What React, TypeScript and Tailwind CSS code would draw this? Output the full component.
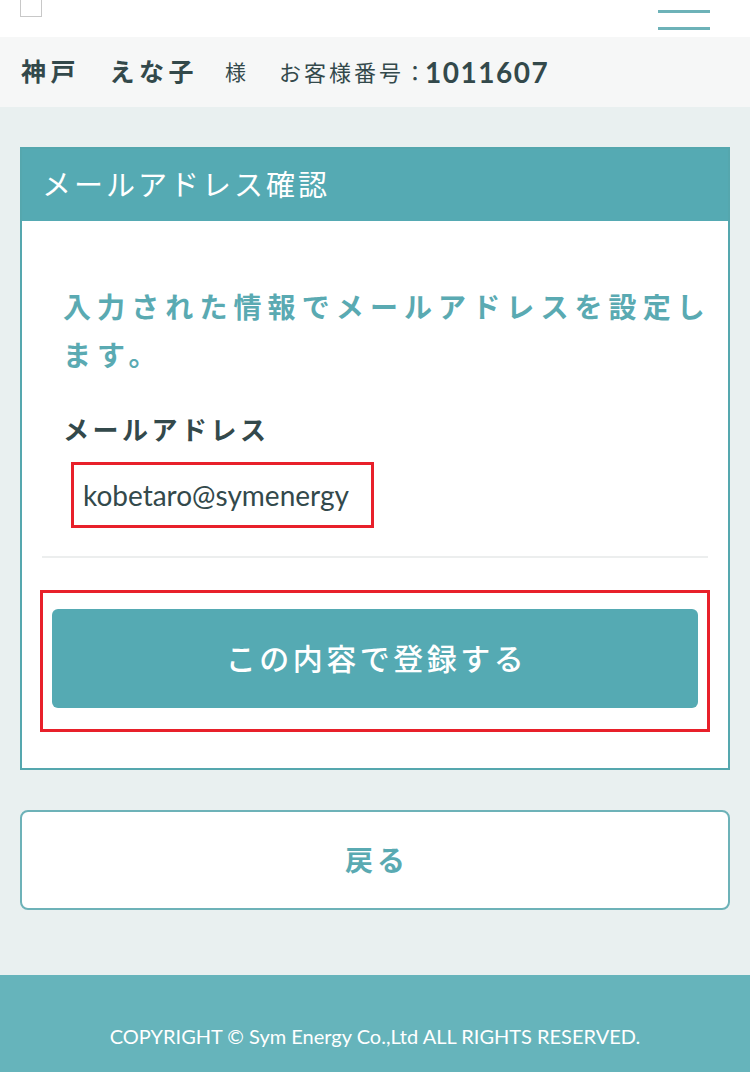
import React from "react";

export default function App() {
  const font = { fontFamily: 'Lato, "Noto Sans CJK JP", sans-serif' };
  return (
    <div className="w-[750px] min-h-[1072px] flex flex-col bg-[#e9f0f0]" style={font}>
      {/* top header */}
      <div className="h-[37px] bg-white flex items-start justify-between px-[20px]">
        <div className="w-[22px] h-[17px] border border-[#c8c8c8] border-t-0" />
        <div className="flex flex-col gap-[14px] pt-[10px] pr-[20px]">
          <div className="w-[52px] h-[3px] bg-[#6db2b8]" />
          <div className="w-[52px] h-[3px] bg-[#6db2b8]" />
        </div>
      </div>
      {/* name bar */}
      <div className="h-[70px] bg-[#f6f7f7] flex items-center px-[21px] text-[#33494b]">
        <span className="text-[25px] font-bold tracking-[4.5px]">神戸　えな子</span>
        <span className="text-[21px] ml-[27px]">様</span>
        <span className="text-[22px] ml-[33px] tracking-[3px]">お客様番号：</span>
        <span className="text-[28px] font-bold tracking-[1.5px] -ml-[4px]">1011607</span>
      </div>
      {/* main */}
      <div className="flex-1 px-[20px] pt-[40px] pb-[65px] flex flex-col">
        <div className="border-2 border-[#55a7ae] bg-white">
          <div className="h-[72px] bg-[#55aab3] flex items-center px-[20px] text-white text-[29px] tracking-[3px]">
            メールアドレス確認
          </div>
          <div className="px-[20px] pt-[62px] pb-[36px]">
            <p className="pl-[21px] -mr-[12px] text-[#5aaab2] text-[28px] font-bold leading-[48px] tracking-[6.1px]">
              入力された情報でメールアドレスを設定します。
            </p>
            <p className="px-[21px] mt-[32px] text-[#33494b] text-[26px] font-bold tracking-[3.5px]">
              メールアドレス
            </p>
            <div className="ml-[29px] mt-[12px] w-[303px] h-[66px] border-[3px] border-[#e8202a] flex items-center px-[9px] text-[28px] text-[#33494b]">
              kobetaro@symenergy
            </div>
            <div className="mt-[28px] h-[2px] bg-[#eceeee]" />
            <div className="mt-[32px] -mx-[2px] border-[3px] border-[#e8202a] px-[9px] pt-[16px] pb-[21px]">
              <div className="h-[99px] rounded-[6px] bg-[#55aab3] flex items-center justify-center text-white text-[30px] font-medium tracking-[3.5px] pl-[3px]">
                この内容で登録する
              </div>
            </div>
          </div>
        </div>
        <div className="mt-[40px] h-[100px] border-2 border-[#6db2b8] rounded-[8px] bg-white flex items-center justify-center text-[#5aaab2] text-[28px] font-bold tracking-[4px] pl-[4px]">
          戻る
        </div>
      </div>
      {/* footer */}
      <div className="h-[97px] bg-[#66b4bb] flex items-center justify-center pt-[24px] text-white text-[20px]">
        COPYRIGHT © Sym Energy Co.,Ltd ALL RIGHTS RESERVED.
      </div>
    </div>
  );
}
